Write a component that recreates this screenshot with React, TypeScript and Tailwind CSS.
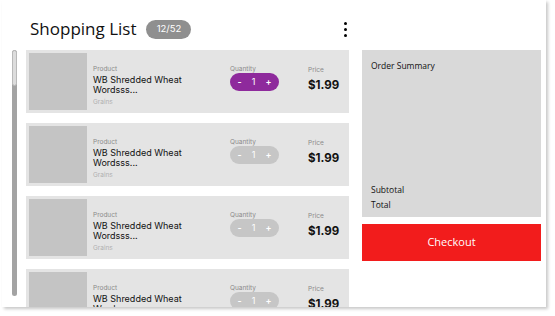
import React from "react";

const items = [
  { id: 1, active: true },
  { id: 2, active: false },
  { id: 3, active: false },
  { id: 4, active: false },
];

function QtyPill({ active }: { active: boolean }) {
  return (
    <div
      className={`flex h-[18px] w-[49px] items-center justify-center gap-[10px] rounded-full text-[9px] font-semibold text-white ${
        active ? "bg-[#8e2a9c]" : "bg-[#c6c6c6]"
      }`}
    >
      <span>-</span>
      <span className="font-normal">1</span>
      <span>+</span>
    </div>
  );
}

function ItemRow({ active }: { active: boolean }) {
  return (
    <div className="flex h-[63px] shrink-0 bg-[#e4e4e4] p-[3px]">
      <div className="h-[57px] w-[58px] bg-[#c4c4c4]" />
      <div className="ml-[6px] flex w-[137px] flex-col pt-[12px]">
        <span className="text-[6.5px] leading-[8px] text-[#8a8a8a]">Product</span>
        <span className="mt-[2px] w-[120px] text-[9px] leading-[10px] text-[#111]">
          WB Shredded Wheat Wordsss...
        </span>
        <span className="mt-[3px] text-[6.5px] leading-[8px] text-[#b0b0b0]">Grains</span>
      </div>
      <div className="flex w-[78px] flex-col pt-[12px]">
        <span className="text-[6.5px] leading-[8px] text-[#8a8a8a]">Quantity</span>
        <div className="mt-[0px]">
          <QtyPill active={active} />
        </div>
      </div>
      <div className="flex flex-col pt-[13px]">
        <span className="text-[6.5px] leading-[8px] text-[#8a8a8a]">Price</span>
        <span className="mt-[4px] text-[11.5px] leading-[14px] font-bold text-[#111]">$1.99</span>
      </div>
    </div>
  );
}

export default function App() {
  return (
    <div className="h-[316px] w-[555px] bg-white font-['Inter',sans-serif]">
      <div className="ml-[2px] flex h-[307px] w-[544px] flex-col overflow-hidden bg-white shadow-[2px_2px_3px_rgba(0,0,0,0.22)]">
        {/* header */}
        <div className="flex h-[50px] shrink-0 pt-[19px] pl-[28px]">
          <div className="flex h-[20px] w-[317px] items-center justify-between">
            <div className="flex items-center">
              <h1 className="text-[17px] font-medium text-[#111] font-['Open_Sans',sans-serif]">
                Shopping List
              </h1>
              <span className="ml-[10px] flex h-[19px] w-[45px] items-center justify-center rounded-full bg-[#8f8f8f] text-[9.5px] text-white">
                12/52
              </span>
            </div>
            <div className="flex flex-col gap-[3px]">
              <span className="block h-[3px] w-[3px] rounded-full bg-black" />
              <span className="block h-[3px] w-[3px] rounded-full bg-black" />
              <span className="block h-[3px] w-[3px] rounded-full bg-black" />
            </div>
          </div>
        </div>

        <div className="flex min-h-0 flex-1">
          {/* scrollbar */}
          <div className="ml-[10px] flex h-[246px] w-[5px] flex-col overflow-hidden rounded-full bg-[#a3a3a3]">
            <div className="h-[36px] rounded-full border border-[#b8b8b8] bg-[#dcdcdc]" />
          </div>

          {/* list */}
          <div className="ml-[9px] flex w-[323px] flex-col gap-[10px] overflow-hidden">
            {items.map((it) => (
              <ItemRow key={it.id} active={it.active} />
            ))}
          </div>

          {/* summary */}
          <div className="ml-[13px] flex w-[179px] flex-col">
            <div className="flex h-[167px] flex-col bg-[#d9d9d9] px-[9px] pt-[10px] pb-[5px] text-[8.5px] font-medium text-[#111] font-['Open_Sans',sans-serif]">
              <span>Order Summary</span>
              <div className="mt-auto flex flex-col gap-[3px]">
                <span>Subtotal</span>
                <span>Total</span>
              </div>
            </div>
            <button className="mt-[7px] flex h-[37px] items-center justify-center bg-[#f21c1c] text-[11px] text-white font-['Open_Sans',sans-serif]">
              Checkout
            </button>
          </div>
        </div>
      </div>
    </div>
  );
}
